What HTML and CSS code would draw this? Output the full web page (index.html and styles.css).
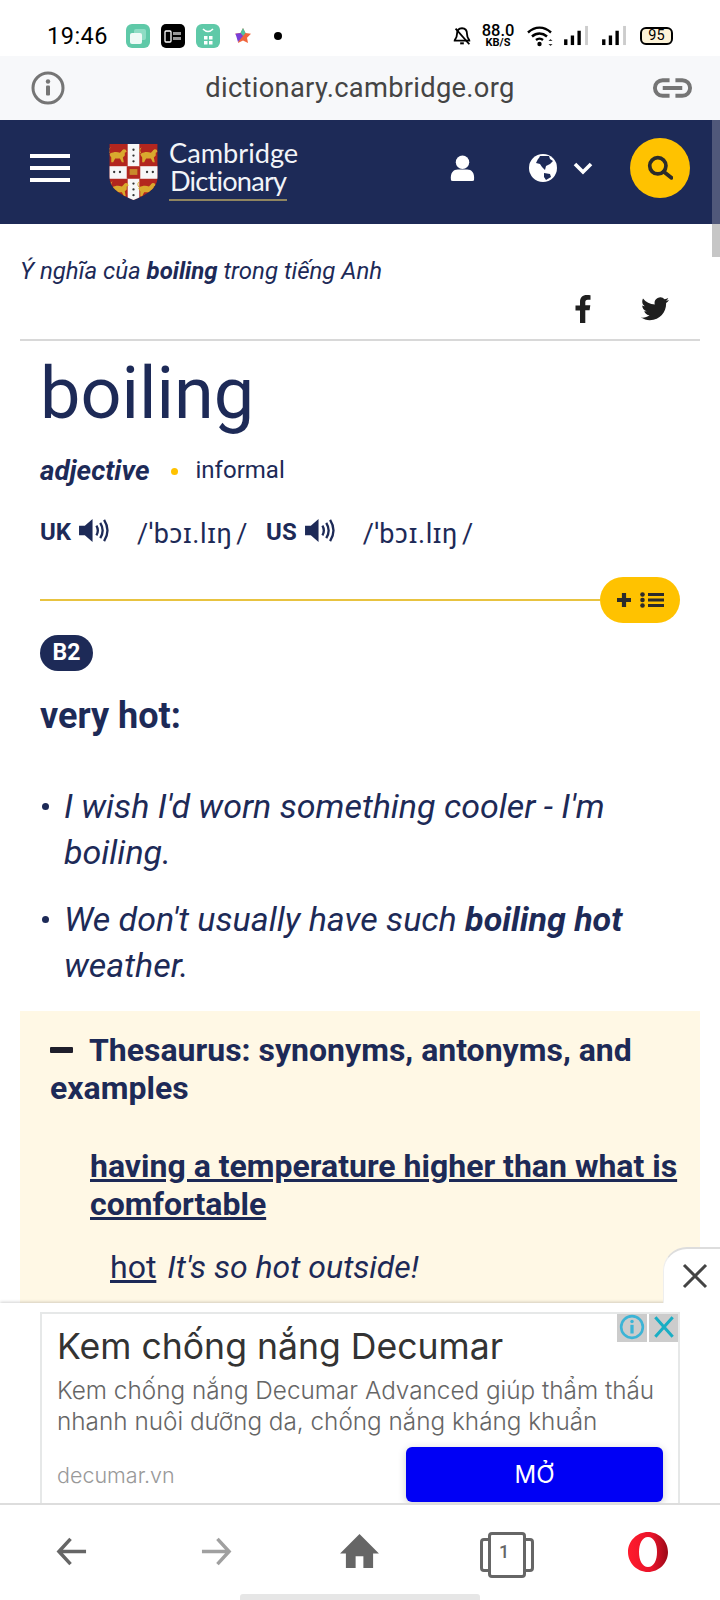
FILE: index.html
```html
<!DOCTYPE html>
<html lang="vi">
<head>
<meta charset="utf-8">
<title>boiling</title>
<link rel="stylesheet" href="styles.css">
</head>
<body>
<div class="app">
  <div class="status">
    <span class="time">19:46</span>
    <span class="notifs">
      <svg class="nicon" viewBox="0 0 24 24"><rect width="24" height="24" rx="6" fill="#5fc9a8"/><rect x="8" y="5" width="12" height="11" rx="2" fill="#8edcc4"/><rect x="4" y="9" width="12" height="11" rx="2" fill="#eefaf6"/></svg>
      <svg class="nicon" viewBox="0 0 24 24"><rect width="24" height="24" rx="5" fill="#000"/><rect x="4" y="7" width="6" height="11" rx="1" fill="none" stroke="#fff" stroke-width="1.300"/><rect x="12" y="8" width="8" height="3" fill="#999"/><rect x="12" y="13" width="8" height="3" fill="#999"/></svg>
      <svg class="nicon" viewBox="0 0 24 24"><rect width="24" height="24" rx="6" fill="#5fc9a8"/><path d="M7 5q5 5 10 0" fill="none" stroke="#fff" stroke-width="1.600"/><rect x="8" y="12" width="3.500" height="3.500" fill="#fff"/><rect x="13" y="12" width="3.500" height="3.500" fill="#fff"/><rect x="8" y="17" width="3.500" height="3.500" fill="#fff"/><rect x="13" y="17" width="3.500" height="3.500" fill="#fff"/></svg>
      <svg class="nicon" viewBox="0 0 24 24"><path d="M12 4l2.500 5 5.500.8-4 3.900 1 5.300-5-2.600-5 2.600 1-5.300-4-3.900 5.500-.8z" fill="#f0653c"/><path d="M12 4l2.500 5-2.500 3-2.500-3z" fill="#4fc3a1"/><path d="M4.500 9.800l5-.8 2.500 3-5 6z" fill="#7a3fd8"/></svg>
      <span class="ndot"></span>
    </span>
    <span class="sys">
      <svg class="mute" viewBox="0 0 24 24"><path d="M12 3.500c-4 0-5.500 3-5.500 6.500 0 4-2.500 6-2.500 7h16c0-1-2.500-3-2.500-7 0-3.500-1.500-6.500-5.500-6.500z" fill="none" stroke="#000" stroke-width="2"/><path d="M10 20h4" stroke="#000" stroke-width="2.200"/><path d="M5 4l15 17" stroke="#000" stroke-width="2"/></svg>
      <span class="speed"><b>88.0</b><i>KB/S</i></span>
      <svg class="wifi" viewBox="0 0 28 24"><path d="M1.500 8.500c7-6.500 16-6.500 23 0M5.500 12.500c4.500-4 10.500-4 15 0M9.500 16c2-1.700 5-1.700 7 0" fill="none" stroke="#000" stroke-width="2.400"/><circle cx="13" cy="20" r="2.200" fill="#000"/><path d="M24 15l2 2h-4zM24 22l2-2h-4z" fill="#333"/></svg>
      <svg class="bars" viewBox="0 0 26 22"><rect y="15" width="3.500" height="6" fill="#000"/><rect x="7" y="11" width="3.500" height="10" fill="#000"/><rect x="14" y="6" width="3.500" height="15" fill="#000"/><rect x="22" y="1" width="3" height="20" fill="#ccc"/></svg>
      <svg class="bars" viewBox="0 0 26 22"><rect y="15" width="3.500" height="6" fill="#000"/><rect x="7" y="11" width="3.500" height="10" fill="#000"/><rect x="14" y="6" width="3.500" height="15" fill="#000"/><rect x="22" y="1" width="3" height="20" fill="#ccc"/></svg>
      <span class="batt">95</span>
    </span>
  </div>

  <div class="urlbar">
    <svg class="urlinfo" viewBox="0 0 34 34"><circle cx="17" cy="17" r="15" fill="none" stroke="#757575" stroke-width="3"/><rect x="15" y="14.500" width="4" height="10" rx="1" fill="#757575"/><circle cx="17" cy="10.500" r="2.200" fill="#757575"/></svg>
    <span class="url">dictionary.cambridge.org</span>
    <svg class="urllink" viewBox="0 0 42 22"><path d="M18 3H11a8 8 0 0 0 0 16h7M24 3h7a8 8 0 0 1 0 16h-7M11 11h20" fill="none" stroke="#757575" stroke-width="4"/></svg>
  </div>

  <header class="top">
    <div class="burger"><span></span><span></span><span></span></div>
    <div class="logo">
      <svg class="shield" viewBox="0 0 52 60">
        <defs>
          <clipPath id="shieldclip"><path d="M1 1h50v34c0 12-12 19-25 24C13 54 1 47 1 35z"/></clipPath>
          <g id="lion" fill="#d9a92e">
            <path d="M3 9c3-2 7-2 10-1l2-2c1-2 3-2 4-1l1 2-2 1 0 3-2 2 1 5h-2l-2-4-5 0-2 4H4l0-5-2-3z"/>
            <path d="M3 9C1 7 1 4 3 3" fill="none" stroke="#d9a92e" stroke-width="1"/>
          </g>
        </defs>
        <g clip-path="url(#shieldclip)">
          <rect width="52" height="60" fill="#b3261e"/>
          <rect x="20" width="12" height="60" fill="#f7f7f7"/>
          <rect y="24" width="52" height="13" fill="#f7f7f7"/>
          <rect x="19" y="24" width="14" height="13" fill="#b3261e"/>
          <rect x="22" y="27" width="8" height="6" fill="#c98a2a"/>
          <use href="#lion" x="-1" y="2"/>
          <use href="#lion" x="31" y="2"/>
          <use href="#lion" x="1" y="37"/>
          <use href="#lion" x="29" y="37"/>
          <g fill="#333">
            <circle cx="26" cy="7" r="1.200"/><circle cx="26" cy="13" r="1.200"/><circle cx="26" cy="19" r="1.200"/><circle cx="26" cy="42" r="1.200"/><circle cx="26" cy="48" r="1.200"/><circle cx="26" cy="54" r="1.200"/>
            <circle cx="6" cy="30" r="1.200"/><circle cx="12" cy="30" r="1.200"/><circle cx="40" cy="30" r="1.200"/><circle cx="46" cy="30" r="1.200"/>
          </g>
        </g>
      </svg>
      <div class="logotext"><span>Cambridge</span><span class="logoline">Dictionary</span></div>
    </div>
    <div class="topicons">
      <svg class="user" viewBox="0 0 26 28"><circle cx="13" cy="7.500" r="7" fill="#fff"/><path d="M1 26c-1-8 3-11 7-11h10c4 0 8 3 7 11q0 1-2 1H3q-2 0-2-1z" fill="#fff"/></svg>
      <svg class="globe" viewBox="0 0 28 28"><circle cx="14" cy="14" r="14" fill="#fff"/><path d="M11 2l9 0 1 3 3 2-3 3-4 2-1 4-3-3-2-3-4-1 2-4 1-1zM15 19l6 1 1 3-5 3-2-3z" fill="#1d2a57"/></svg>
      <svg class="chev" viewBox="0 0 20 14"><path d="M2 3l8 8 8-8" fill="none" stroke="#fff" stroke-width="3.600"/></svg>
      <span class="searchbtn"><svg viewBox="0 0 24 24"><circle cx="10" cy="10" r="7.500" fill="none" stroke="#2b2b2b" stroke-width="3.400"/><path d="M15.500 15.500l7 5.500" stroke="#2b2b2b" stroke-width="3.600" stroke-linecap="round"/></svg></span>
    </div>
  </header>

  <main class="content">
    <p class="crumb">Ý nghĩa của <b>boiling</b> trong tiếng Anh</p>
    <div class="social">
      <svg class="fb" viewBox="0 0 16 28"><path d="M5 28V15.500H0.500V10.500H5V7c0-4.500 2.700-7 6.700-7 1.900 0 3.300.2 3.800.2v4.500h-2.700c-2 0-2.500 1-2.500 2.500v3h5l-.7 5h-4.300V28z" fill="#1f1f1f"/></svg>
      <svg class="tw" viewBox="0 0 28 24"><path d="M28 3c-1 .5-2 .8-3.300 1 1.200-.7 2-1.800 2.500-3.100-1.100.7-2.400 1.100-3.600 1.400A5.700 5.700 0 0 0 13.800 7.500C9 7.300 4.800 5 2 1.500c-1.500 2.600-.8 6 1.800 7.700-1 0-1.900-.3-2.600-.7 0 2.800 2 5.100 4.600 5.700-.8.200-1.700.2-2.600.1.700 2.300 2.900 3.900 5.300 4-2.400 1.900-5.400 2.700-8.500 2.300 2.600 1.700 5.600 2.600 8.800 2.600 10.700 0 16.700-9 16.300-17.100C26.300 5.200 27.300 4.200 28 3z" fill="#1f1f1f"/></svg>
    </div>
    <hr class="rule">
    <div class="entry">
      <h1 class="word">boiling</h1>
      <div class="pos"><b>adjective</b><span class="dot"></span><span class="gram">informal</span></div>
      <div class="pron">
        <b>UK</b>
        <svg class="spk" viewBox="0 0 32 28"><path d="M1 9h6l8-7v24l-8-7H1z" fill="#1d2a57"/><path d="M19 9q3 5 0 10M23 6q5 8 0 16M27 3q7 11 0 22" fill="none" stroke="#1d2a57" stroke-width="2.400"/></svg>
        <span class="ipa">/ˈbɔɪ.lɪŋ<span class="slash">/</span></span>
        <b>US</b>
        <svg class="spk" viewBox="0 0 32 28"><path d="M1 9h6l8-7v24l-8-7H1z" fill="#1d2a57"/><path d="M19 9q3 5 0 10M23 6q5 8 0 16M27 3q7 11 0 22" fill="none" stroke="#1d2a57" stroke-width="2.400"/></svg>
        <span class="ipa">/ˈbɔɪ.lɪŋ<span class="slash">/</span></span>
      </div>
      <div class="divider">
        <span class="goldline"></span>
        <span class="pill">
          <svg viewBox="0 0 16 16" class="plus"><path d="M8 1v14M1 8h14" stroke="#2b2b2b" stroke-width="4.200"/></svg>
          <svg viewBox="0 0 24 16" class="list"><circle cx="2.500" cy="2.500" r="2.300" fill="#2b2b2b"/><circle cx="2.500" cy="8" r="2.300" fill="#2b2b2b"/><circle cx="2.500" cy="13.500" r="2.300" fill="#2b2b2b"/><path d="M8 2.500h16M8 8h16M8 13.500h16" stroke="#2b2b2b" stroke-width="2.800"/></svg>
        </span>
      </div>
      <span class="level">B2</span>
      <div class="def">very hot:</div>
      <ul class="examples">
        <li>I wish I'd worn something cooler - I'm boiling.</li>
        <li>We don't usually have such <b>boiling hot</b> weather.</li>
      </ul>
    </div>
    <section class="thes">
      <h2 class="thes-title"><span class="minus"></span>Thesaurus: synonyms, antonyms, and examples</h2>
      <h3 class="thes-sub">having a temperature higher than what is comfortable</h3>
      <p class="thes-ex"><u>hot</u> <i>It's so hot outside!</i></p>
    </section>
  </main>

  <aside class="adwrap">
    <div class="adclose"><svg viewBox="0 0 26 26"><path d="M2 2l22 22M24 2L2 24" stroke="#444" stroke-width="3"/></svg></div>
    <div class="ad">
      <div class="adbadges">
        <span><svg viewBox="0 0 24 24"><circle cx="12" cy="12" r="10" fill="none" stroke="#3cb4d6" stroke-width="2.400"/><rect x="10.500" y="10" width="3" height="8" fill="#3cb4d6"/><circle cx="12" cy="7" r="1.600" fill="#3cb4d6"/></svg></span>
        <span><svg viewBox="0 0 24 24"><path d="M4 3l16 18M20 3L4 21" stroke="#19aec4" stroke-width="2.800"/></svg></span>
      </div>
      <div class="adtitle">Kem chống nắng Decumar</div>
      <div class="adtext">Kem chống nắng Decumar Advanced giúp thẩm thấu nhanh nuôi dưỡng da, chống nắng kháng khuẩn</div>
      <div class="adfoot"><span class="addomain">decumar.vn</span><span class="adbtn">MỞ</span></div>
    </div>
  </aside>

  <nav class="nav">
    <svg class="navicon back" viewBox="3 0 31 32"><path d="M33 16H5M17 3L5 16l12 13" fill="none" stroke="#666" stroke-width="3.600"/></svg>
    <svg class="navicon fwd" viewBox="2 0 31 32"><path d="M3 16h28M19 3l12 13-12 13" fill="none" stroke="#a0a0a0" stroke-width="3.600"/></svg>
    <svg class="navicon home" viewBox="0 0 40 35"><path d="M20 0L40 20H34V35H24V23H16V35H6V20H0z" fill="#666"/></svg>
    <span class="tabs"><span class="tabnum">1</span></span>
    <svg class="navicon opera" viewBox="0 0 40 40"><defs><linearGradient id="og" x1="0" x2="1" y1="0" y2="0"><stop offset="0" stop-color="#ff1b2d"/><stop offset=".6" stop-color="#e8132a"/><stop offset="1" stop-color="#9a0a18"/></linearGradient></defs><path fill-rule="evenodd" d="M20 0c11 0 20 9 20 20s-9 20-20 20S0 31 0 20 9 0 20 0zm0 5c-6 0-9 7-9 15s3 15 9 15 9-7 9-15-3-15-9-15z" fill="url(#og)"/></svg>
    <span class="homebar"></span>
  </nav>

  <div class="scrollbar"></div>
</div>
</body>
</html>
```

FILE: styles.css
```css
* { box-sizing: border-box; }
html, body { margin: 0; padding: 0; background: #fff; }
body { font-family: Roboto, "Noto Sans", sans-serif; color: #1d2a57; }
.app { position: relative; width: 720px; height: 1600px; display: flex; flex-direction: column; overflow: hidden; }

.status { height: 56px; flex: none; background: #fff; display: flex; align-items: center; padding: 17px 47px 2px 47px; color: #000; }
.time { font-size: 23.500px; letter-spacing: .5px; width: 79px; }
.notifs { display: flex; align-items: center; gap: 11px; }
.nicon { width: 24px; height: 24px; display: block; }
.ndot { width: 8px; height: 8px; border-radius: 50%; background: #000; margin-left: 8px; }
.sys { margin-left: auto; display: flex; align-items: center; }
.mute { width: 22px; height: 22px; margin-right: 9px; }
.speed { display: flex; flex-direction: column; align-items: center; width: 32px; line-height: 1; }
.speed b { font-size: 16.500px; font-weight: 500; line-height: 14px; }
.speed i { font-size: 11px; font-style: normal; font-weight: 700; line-height: 10px; }
.wifi { width: 29px; height: 24px; margin-left: 12px; }
.bars { width: 25px; height: 21px; margin-left: 9px; }
.bars + .bars { margin-left: 13px; }
.batt { margin-left: 13px; width: 33px; height: 18px; border: 2px solid #000; border-radius: 6px; background: #fdf3d8; font-size: 14.500px; line-height: 14px; text-align: center; }

.urlbar { height: 64px; flex: none; background: #f7f8fa; display: flex; align-items: center; padding: 0 27px 0 31px; }
.urlinfo { width: 34px; height: 34px; }
.url { flex: 1; text-align: center; font-size: 27.300px; color: #444; letter-spacing: .3px; margin-left: 3px; }
.urllink { width: 41px; height: 22px; }

.top { height: 104px; flex: none; background: #1d2a57; display: flex; align-items: center; padding: 0 30px 8px 30px; }
.burger { width: 40px; display: flex; flex-direction: column; gap: 8px; }
.burger span { height: 4px; background: #fff; display: block; }
.logo { display: flex; align-items: center; margin: 8px 0 0 38px; }
.shield { width: 51px; height: 58px; }
.logotext { display: flex; flex-direction: column; align-items: flex-start; color: #f2f4f8; font-size: 27.200px; line-height: 28px; margin: -5px 0 0 10px; font-family: Lato, Roboto, sans-serif; }
.logoline { border-bottom: 2px solid #8f8560; padding: 0 1px 4px 1px; letter-spacing: -.8px; }
.topicons { margin-left: auto; display: flex; align-items: center; }
.user { width: 25px; height: 27px; }
.globe { width: 28px; height: 28px; margin-left: 54px; }
.chev { width: 20px; height: 14px; margin-left: 16px; }
.searchbtn { width: 60px; height: 60px; border-radius: 50%; background: #ffc200; margin-left: 37px; display: flex; align-items: center; justify-content: center; }
.searchbtn svg { width: 26px; height: 26px; }

.content { flex: 1; min-height: 0; overflow: hidden; padding: 0 20px; }
.crumb { margin: 34px 0 0; font-size: 24px; line-height: 27px; font-style: italic; }
.crumb b { font-weight: 700; }
.social { display: flex; justify-content: flex-end; align-items: center; gap: 50px; padding-right: 31px; margin-top: 8px; height: 32px; }
.fb { width: 16px; height: 28px; }
.tw { width: 28px; height: 24px; }
.rule { margin: 14px 0 0; border: 0; border-top: 2px solid #d8d8d8; height: 0; }
.entry { padding: 0 20px; }
.word { margin: 11px 0 0; font-size: 72px; line-height: 84px; font-weight: 400; }
.pos { display: flex; align-items: center; height: 38px; margin-top: 15px; font-size: 27.800px; }
.pos b { font-style: italic; font-weight: 700; }
.dot { width: 7px; height: 7px; border-radius: 50%; background: #ffc200; margin: 2px 18px 0 21px; }
.gram { font-size: 24px; }
.pron { display: flex; align-items: center; height: 40px; margin-top: 23px; font-size: 24px; }
.pron b { font-weight: 700; }
.spk { width: 31px; height: 27px; margin: -3px 0 0 7px; }
.ipa { font-size: 27px; margin-left: 28px; width: 129px; letter-spacing: .6px; white-space: nowrap; }
.slash { margin-left: 4px; }
.divider { display: flex; align-items: center; margin-top: 25px; height: 46px; }
.goldline { flex: 1; height: 2px; background: #e8c340; }
.pill { width: 80px; height: 46px; border-radius: 23px; background: #ffc200; display: flex; align-items: center; justify-content: center; gap: 8px; }
.plus { width: 16px; height: 16px; }
.list { width: 24px; height: 16px; }
.level { display: inline-block; margin-top: 12px; width: 53px; height: 36px; border-radius: 18px; background: #1d2a57; color: #fff; font-weight: 700; font-size: 23px; line-height: 36px; text-align: center; vertical-align: top; }
.def { font-size: 36px; font-weight: 700; line-height: 44px; margin-top: 23px; }
.examples { list-style: none; margin: 45px 0 0; padding: 0; font-size: 34px; line-height: 46px; font-style: italic; }
.examples li { position: relative; padding-left: 24px; margin-bottom: 21px; }
.examples li::before { content: ""; position: absolute; left: 2px; top: 20px; width: 7px; height: 7px; border-radius: 50%; background: #1d2a57; }
.thes { background: #fff8e5; margin-top: 23px; padding: 20px 22px 20px 30px; height: 400px; }
.thes-title { margin: 0; font-size: 32px; line-height: 38px; font-weight: 700; }
.minus { display: inline-block; width: 23px; height: 6px; border-radius: 1px; background: #1f1f2b; margin-right: 16px; vertical-align: 8px; }
.thes-sub { margin: 40px 0 0 40px; font-size: 32px; line-height: 38px; font-weight: 700; text-decoration: underline; }
.thes-ex { margin: 24px 0 0 60px; font-size: 32px; line-height: 40px; }
.thes-ex i { margin-left: 3px; }

.adwrap { position: relative; flex: none; height: 200px; background: #fff; padding: 9px 40px 0; box-shadow: 0 -1px 3px rgba(0,0,0,.18); }
.adclose { position: absolute; right: 0; top: -56px; width: 57px; height: 56px; background: #fff; border-top-left-radius: 24px; border-top: 2px solid #ddd; border-left: 1px solid #eee; display: flex; align-items: center; justify-content: center; padding-left: 6px; }
.adclose svg { width: 26px; height: 26px; }
.ad { position: relative; height: 191px; border: 2px solid #e6e8e8; border-bottom: 0; padding: 11px 15px 0 15px; overflow: hidden; }
.adbadges { position: absolute; top: -2px; right: -1px; display: flex; gap: 2px; }
.adbadges span { width: 30px; height: 30px; background: #ccc; display: flex; align-items: center; justify-content: center; }
.adbadges svg { width: 26px; height: 26px; }
.adtitle { font-size: 35.600px; line-height: 44px; color: #333; font-family: Inter, sans-serif; white-space: nowrap; }
.adtext { font-size: 24.300px; line-height: 31px; color: #666; margin-top: 6px; font-family: Inter, sans-serif; font-weight: 300; height: 62px; overflow: hidden; }
.adfoot { display: flex; align-items: center; justify-content: space-between; margin-top: 10px; }
.addomain { font-size: 21.500px; color: #999; font-family: Inter, sans-serif; font-weight: 300; }
.adbtn { width: 257px; height: 55px; border-radius: 6px; background: #0000f5; color: #fff; font-size: 24px; line-height: 55px; text-align: center; font-family: Inter, sans-serif; box-shadow: 0 2px 8px rgba(0,0,0,.2); }

.nav { position: relative; flex: none; height: 97px; background: #fff; border-top: 2px solid #ddd; }
.navicon { position: absolute; }
.back { left: 56px; top: 31px; width: 32px; height: 31px; }
.fwd { left: 200px; top: 31px; width: 32px; height: 31px; }
.home { left: 340px; top: 29px; width: 39px; height: 34px; }
.tabs { position: absolute; left: 480px; top: 27px; width: 48px; height: 40px; }
.tabs::before { content: ""; position: absolute; left: 0; top: 6px; width: 48px; height: 28px; border: 3.500px solid #666; border-radius: 4px; }
.tabs::after { content: ""; position: absolute; left: 8px; top: 0; width: 32px; height: 40px; border: 3.500px solid #666; border-radius: 4px; background: #fff; }
.tabnum { position: absolute; z-index: 1; left: 0; right: 0; top: 8px; text-align: center; font-size: 18px; line-height: 24px; color: #666; font-weight: 500; }
.opera { left: 628px; top: 27px; width: 40px; height: 40px; }
.homebar { position: absolute; left: 240px; bottom: 0; width: 240px; height: 6px; border-radius: 3px 3px 0 0; background: #e6e6e6; }

.scrollbar { position: absolute; right: 0; top: 120px; width: 8px; height: 137px; background: linear-gradient(#50587a 0 104px, #c6c6c6 104px); }
```
